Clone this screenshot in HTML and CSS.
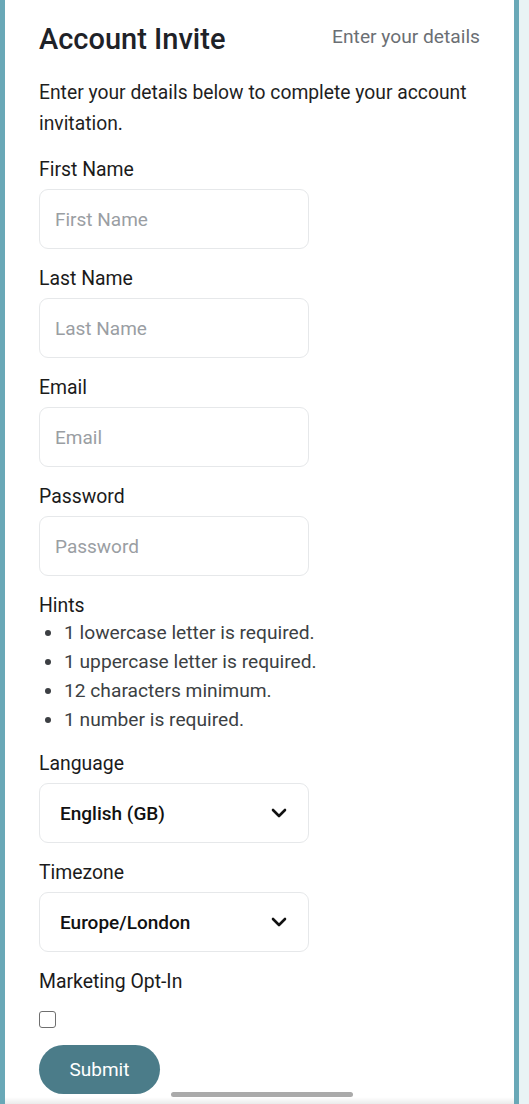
FILE: index.html
```html
<!DOCTYPE html>
<html lang="en">
<head>
<meta charset="utf-8">
<title>Account Invite</title>
<link rel="stylesheet" href="styles.css">
</head>
<body>
<div class="screen">
  <main class="card">
    <header class="header">
      <h1 class="title">Account Invite</h1>
      <span class="step">Enter your details</span>
    </header>
    <p class="intro">Enter your details below to complete your account invitation.</p>
    <form class="form">
      <div class="field">
        <label class="label" for="first">First Name</label>
        <input class="input" id="first" type="text" placeholder="First Name">
      </div>
      <div class="field">
        <label class="label" for="last">Last Name</label>
        <input class="input" id="last" type="text" placeholder="Last Name">
      </div>
      <div class="field">
        <label class="label" for="email">Email</label>
        <input class="input" id="email" type="email" placeholder="Email">
      </div>
      <div class="field">
        <label class="label" for="pw">Password</label>
        <input class="input" id="pw" type="password" placeholder="Password">
      </div>
      <div class="field">
        <div class="label">Hints</div>
        <ul class="hints">
          <li>1 lowercase letter is required.</li>
          <li>1 uppercase letter is required.</li>
          <li>12 characters minimum.</li>
          <li>1 number is required.</li>
        </ul>
      </div>
      <div class="field">
        <label class="label" for="lang">Language</label>
        <select class="select" id="lang"><option>English (GB)</option></select>
      </div>
      <div class="field">
        <label class="label" for="tz">Timezone</label>
        <select class="select" id="tz"><option>Europe/London</option></select>
      </div>
      <div class="field">
        <label class="label" for="opt">Marketing Opt-In</label>
        <input class="check" id="opt" type="checkbox">
      </div>
      <button class="submit" type="button">Submit</button>
    </form>
  </main>
  <div class="side"></div>
  <div class="home-bar"></div>
  <div class="bottom-shade"></div>
</div>
</body>
</html>
```
FILE: styles.css
```css
* { box-sizing: border-box; }
html, body { margin: 0; padding: 0; }
body {
  font-family: Roboto, "Noto Sans", "Liberation Sans", sans-serif;
  background: #ffffff;
  color: #1f1f1f;
}
.screen {
  position: relative;
  display: flex;
  width: 529px;
  height: 1104px;
  overflow: hidden;
}
.card {
  width: 519px;
  border-left: 5px solid #69a8b7;
  border-right: 5px solid #69a8b7;
  padding: 21px 34px 0 34px;
  background: #ffffff;
}
.side {
  flex: 1;
  background: #e9f3f5;
}
.header {
  display: flex;
  justify-content: space-between;
  align-items: flex-start;
}
.title {
  margin: 0;
  font-size: 29px;
  line-height: 37px;
  font-weight: 500;
  color: #1e2228;
}
.step {
  font-size: 19.2px;
  line-height: 32px;
  color: #6b6f74;
}
.intro {
  margin: 19px 0 0 0;
  font-size: 19.3px;
  line-height: 31px;
  color: #1f1f1f;
}
.form {
  margin-top: 19px;
  display: flex;
  flex-direction: column;
  align-items: flex-start;
}
.field {
  display: flex;
  flex-direction: column;
  align-items: flex-start;
  margin-bottom: 18px;
  width: 100%;
}
.label {
  font-size: 19.4px;
  line-height: 24px;
  color: #1b1b1b;
  margin-bottom: 7px;
}
.input {
  width: 270px;
  height: 60px;
  border: 1px solid #e6e8ea;
  border-radius: 9px;
  padding: 0 15px;
  font-family: inherit;
  font-size: 19px;
  color: #1f1f1f;
  background: #fff;
  outline: none;
}
.input::placeholder { color: #9a9ea3; }
.hints {
  margin: -7px 0 0 0;
  padding: 0 0 0 25px;
  font-size: 19.2px;
  line-height: 29px;
  color: #3c3f43;
}
.hints li { padding-left: 0; }
.select {
  -webkit-appearance: none;
  appearance: none;
  width: 270px;
  height: 60px;
  border: 1px solid #e6e8ea;
  border-radius: 9px;
  padding: 0 20px;
  font-family: inherit;
  font-size: 19px;
  font-weight: 500;
  color: #111;
  background-color: #fff;
  background-image: url("data:image/svg+xml,%3Csvg xmlns='http://www.w3.org/2000/svg' width='16' height='10' viewBox='0 0 16 10'%3E%3Cpath d='M2 2l6 6 6-6' fill='none' stroke='%23111' stroke-width='2.6' stroke-linecap='round' stroke-linejoin='round'/%3E%3C/svg%3E");
  background-repeat: no-repeat;
  background-position: right 21px center;
  background-size: 16px 10px;
  outline: none;
}
.check {
  -webkit-appearance: none;
  appearance: none;
  margin: 10px 0 0 0;
  width: 17px;
  height: 17px;
  border: 1.5px solid #6f6f6f;
  border-radius: 3px;
  background: #fff;
}
.submit {
  margin-top: -1px;
  width: 121px;
  height: 49px;
  border: none;
  border-radius: 25px;
  background: #4b7c89;
  color: #ffffff;
  font-family: inherit;
  font-size: 19px;
  cursor: pointer;
}
.home-bar {
  position: absolute;
  left: 171px;
  bottom: 7px;
  width: 182px;
  height: 5px;
  border-radius: 3px;
  background: #aaaaaa;
}
.bottom-shade {
  position: absolute;
  left: 5px;
  right: 15px;
  bottom: 0;
  height: 7px;
  background: linear-gradient(to bottom, rgba(0,0,0,0), rgba(0,0,0,0.08));
}
```
